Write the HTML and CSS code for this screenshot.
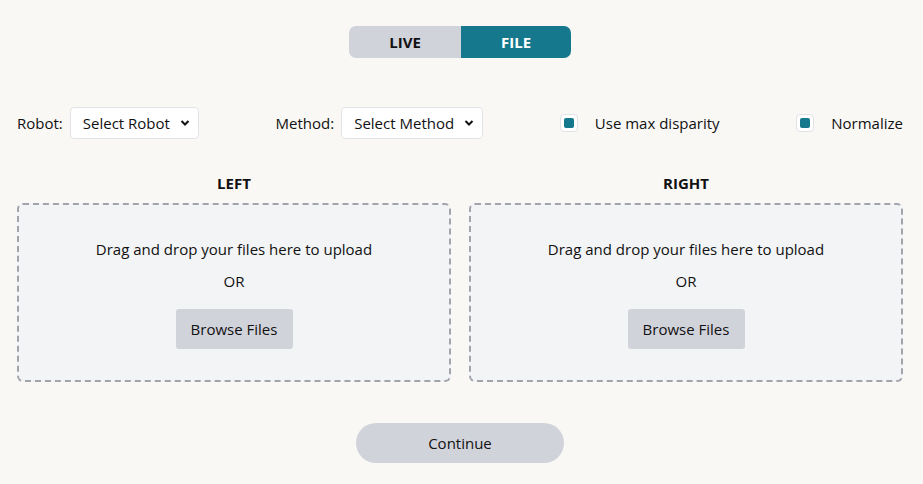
FILE: index.html
```html
<!DOCTYPE html>
<html>
<head>
<meta charset="utf-8">
<link rel="stylesheet" href="styles.css">
</head>
<body>
<div class="page">
  <div class="toggle">
    <button class="tg tg-live">LIVE</button>
    <button class="tg tg-file">FILE</button>
  </div>
  <div class="controls">
    <label class="field">Robot:
      <span class="select">Select Robot <svg width="10" height="8" viewBox="0 0 10 8"><path d="M1.5 2 L5 5.5 L8.5 2" fill="none" stroke="#111" stroke-width="2"/></svg></span>
    </label>
    <label class="field">Method:
      <span class="select">Select Method <svg width="10" height="8" viewBox="0 0 10 8"><path d="M1.5 2 L5 5.5 L8.5 2" fill="none" stroke="#111" stroke-width="2"/></svg></span>
    </label>
    <label class="check"><span class="box"><span class="dot"></span></span>Use max disparity</label>
    <label class="check"><span class="box"><span class="dot"></span></span>Normalize</label>
  </div>
  <div class="drops">
    <div class="col">
      <div class="heading">LEFT</div>
      <div class="zone">
        <p class="msg">Drag and drop your files here to upload</p>
        <p class="or">OR</p>
        <button class="browse">Browse Files</button>
      </div>
    </div>
    <div class="col">
      <div class="heading">RIGHT</div>
      <div class="zone">
        <p class="msg">Drag and drop your files here to upload</p>
        <p class="or">OR</p>
        <button class="browse">Browse Files</button>
      </div>
    </div>
  </div>
  <div class="footer">
    <button class="continue">Continue</button>
  </div>
</div>
</body>
</html>
```
FILE: styles.css
```css
* { box-sizing: border-box; }
body {
  margin: 0;
  background: #f9f8f5;
  font-family: "Open Sans", "Noto Sans", sans-serif;
  color: #111;
  font-size: 15px;
}
.page {
  padding: 26px 20px 0 17px;
}
.toggle {
  display: flex;
  width: 222px;
  height: 32px;
  margin: 0 auto;
  border-radius: 7px;
  overflow: hidden;
}
.tg {
  border: 0;
  font-family: inherit;
  font-weight: 700;
  font-size: 15px;
  padding: 0;
}
.tg-live { width: 112px; background: #d1d3db; color: #111; }
.tg-file { width: 110px; background: #15788c; color: #fff; }
.controls {
  margin-top: 49px;
  display: flex;
  justify-content: space-between;
  align-items: center;
  height: 32px;
}
.field {
  display: flex;
  align-items: center;
  gap: 7px;
}
.select {
  display: flex;
  align-items: center;
  justify-content: space-between;
  gap: 10px;
  height: 32px;
  padding: 0 8px 0 12px;
  background: #fff;
  border: 1px solid #e3e4e8;
  border-radius: 4px;
}
.check {
  display: flex;
  align-items: center;
  gap: 17px;
}
.box {
  width: 18px;
  height: 18px;
  border: 1px solid #e2e3e6;
  border-radius: 4px;
  background: #fff;
  display: flex;
  align-items: center;
  justify-content: center;
}
.dot {
  width: 10px;
  height: 10px;
  border-radius: 2px;
  background: #15788c;
}
.drops {
  margin-top: 34px;
  display: flex;
  gap: 18px;
}
.col { flex: 1; }
.heading {
  text-align: center;
  font-weight: 700;
  font-size: 15px;
  height: 20px;
  line-height: 20px;
  margin-bottom: 10px;
}
.zone {
  height: 179px;
  border: 2px dashed #a1a4ad;
  border-radius: 6px;
  background: #f3f4f6;
  display: flex;
  flex-direction: column;
  align-items: center;
  padding-top: 33px;
}
.msg, .or { margin: 0; line-height: 22px; }
.or { margin-top: 10px; }
.browse {
  margin-top: 17px;
  width: 117px;
  height: 40px;
  border: 0;
  border-radius: 3px;
  background: #d1d3db;
  font-family: inherit;
  font-size: 15px;
  color: #111;
}
.footer {
  margin-top: 41px;
  display: flex;
  justify-content: center;
}
.continue {
  width: 208px;
  height: 40px;
  border: 0;
  border-radius: 20px;
  background: #d1d3db;
  font-family: inherit;
  font-size: 15px;
  color: #111;
}
```
